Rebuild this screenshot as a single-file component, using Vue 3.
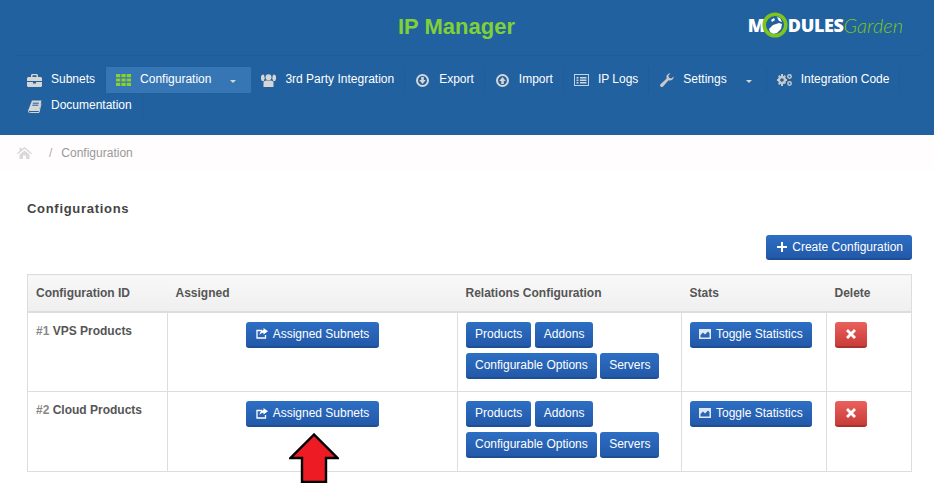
<script setup>
const NAV_ITEMS = [
	{ label: 'Subnets', icon: 'briefcase' },
	{ label: 'Configuration', icon: 'grid', active: true, caret: true },
	{ label: '3rd Party Integration', icon: 'users' },
	{ label: 'Export', icon: 'down' },
	{ label: 'Import', icon: 'up' },
	{ label: 'IP Logs', icon: 'list' },
	{ label: 'Settings', icon: 'wrench', caret: true },
	{ label: 'Integration Code', icon: 'cogs' },
	{ label: 'Documentation', icon: 'book' },
];

const ROWS = [
	{ id: '#1', name: 'VPS Products' },
	{ id: '#2', name: 'Cloud Products' },
];

const RELATIONS = ['Products', 'Addons', 'Configurable Options', 'Servers'];
</script>

<template>
	<div class="page">
		<header class="header">
			<div class="header-top">
				<h1 class="title">IP Manager</h1>
				<div class="logo">
					<span class="logo-bold">M</span>
					<svg class="logo-ring" viewBox="0 0 26 26" width="26" height="26">
						<path d="M9 8l3-2 1 2-3 2zM15 5l3 1 2 4-3-1zM7 17l4-4 6-2 3 1-1 5-4 4-4 1-3-2z" fill="#fff" />
						<circle cx="13" cy="13" r="10.8" fill="none" stroke="#7cc51c" stroke-width="3.6" />
					</svg>
					<span class="logo-bold">DULES</span>
					<span class="logo-thin">Garden</span>
				</div>
			</div>
			<nav class="nav">
				<a
					v-for="item in NAV_ITEMS"
					:key="item.label"
					class="nav-item"
					:class="{ active: item.active }"
				>
					<span class="nav-icon">
						<svg v-if="item.icon === 'briefcase'" viewBox="0 0 15 13" width="15" height="13" fill="#d6d6d6">
							<path d="M5 0h5l1 1v2h3l1 1v3H0V4l1-1h3V1zm.5 1.2V3h4V1.200z" fill-rule="evenodd" />
							<path d="M0 8h6v1.500h3V8h6v4l-1 1H1l-1-1z" />
						</svg>
						<svg v-else-if="item.icon === 'grid'" viewBox="0 0 15 12" width="15" height="12" fill="#8ad02f">
							<path d="M0 0h4.300v3.200H0zM5.400 0h4.300v3.200H5.400zM10.700 0H15v3.200h-4.300zM0 4.400h4.300v3.200H0zM5.400 4.400h4.300v3.200H5.400zM10.700 4.400H15v3.200h-4.300zM0 8.800h4.300V12H0zM5.400 8.800h4.300V12H5.400zM10.700 8.800H15V12h-4.300z" />
						</svg>
						<svg v-else-if="item.icon === 'users'" viewBox="0 0 15 13" width="15" height="13" fill="#d6d6d6">
							<circle cx="7.500" cy="3.200" r="3" />
							<path d="M2.500 7.500l2.500-1h5l2.500 1V13h-10z" />
							<path d="M1 .8h2l.8 3.500L2.800 7H.8L0 5V2.500zM14 .8h-2l-.8 3.500 1 2.700h2L15 5V2.500z" />
						</svg>
						<svg v-else-if="item.icon === 'down' || item.icon === 'up'" viewBox="0 0 13 13" width="13" height="13">
							<circle cx="6.500" cy="6.500" r="5.500" fill="none" stroke="#d6d6d6" stroke-width="2" />
							<path :transform="item.icon === 'up' ? 'rotate(180 6.500 6.500)' : ''" d="M5.200 3h2.600v3h2L6.500 10 3.200 6h2z" fill="#d6d6d6" />
						</svg>
						<svg v-else-if="item.icon === 'list'" viewBox="0 0 15 12" width="15" height="12">
							<rect x=".5" y=".5" width="14" height="11" fill="none" stroke="#b9d6ea" />
							<path d="M2.500 3h2v1.500h-2zM6 3h6.500v1.500H6zM2.500 5.500h2V7h-2zM6 5.500h6.500V7H6zM2.500 8h2v1.500h-2zM6 8h6.500v1.500H6z" fill="#d6d6d6" />
						</svg>
						<svg v-else-if="item.icon === 'wrench'" viewBox="0 0 13 13" width="14" height="14" fill="#c9c9c9">
							<path d="M12.800 3.200A3.600 3.600 0 0 1 8 6.700L2.800 12.500a1.500 1.500 0 0 1-2.300-2.100L6.200 5A3.600 3.600 0 0 1 9.800.2L7.800 2.300l.5 2.200 2.200.6z" />
						</svg>
						<svg v-else-if="item.icon === 'cogs'" viewBox="0 0 15 12" width="15" height="12" fill="#c9c9c9">
							<circle cx="5" cy="6" r="3" fill="none" stroke="#c9c9c9" stroke-width="2.400" />
							<path d="M4 0h2v2H4zM4 10h2v2H4zM0 5h2v2H0zM8 5h2v2H8zM1 2.300L2.300 1l1.200 1.200-1.300 1.300zM6.500 8.800l1.300-1.300L9 8.700 7.700 10zM1 9.700l1.200-1.200 1.300 1.300L2.300 11zM6.500 2.200L7.700 1 9 2.300 7.800 3.500z" />
							<circle cx="12.500" cy="2.500" r="1.700" fill="none" stroke="#c9c9c9" stroke-width="1.500" />
							<circle cx="12.500" cy="9.500" r="1.700" fill="none" stroke="#c9c9c9" stroke-width="1.500" />
						</svg>
						<svg v-else viewBox="0 0 14 13" width="14" height="13" fill="none">
							<path d="M4 .5h9.500L11 11H1.500a1 1 0 0 1-1-1.500z" fill="#d6d6d6" />
							<path d="M.8 9.800A1.600 1.600 0 0 0 2.500 12.500H11l2-9" stroke="#d6d6d6" />
							<path d="M4.800 3.200h6M4.300 5.200h6" stroke="#21619f" />
						</svg>
					</span>
					<span class="nav-label">{{ item.label }}</span>
					<span v-if="item.caret" class="caret"></span>
				</a>
			</nav>
		</header>

		<div class="breadcrumb">
			<svg class="home" viewBox="0 0 15 12" width="15" height="12" fill="#d9d9d9">
				<path d="M7.500 0L15 6.200l-.8 1L7.500 1.800.8 7.200 0 6.200 2.500 4V.8h2v1.500z" />
				<path d="M2.500 7.500l5-4 5 4V12H9V8.500H6V12H2.500z" />
			</svg>
			<span class="crumb-sep">/</span>
			<span class="crumb">Configuration</span>
		</div>

		<main class="content">
			<h2 class="heading">Configurations</h2>
			<div class="toolbar">
				<button class="btn btn-create">
					<svg viewBox="0 0 10 10" width="10" height="10" fill="#fff"><path d="M4 0h2v4h4v2H6v4H4V6H0V4h4z" /></svg>
					Create Configuration
				</button>
			</div>
			<table class="table">
				<colgroup>
					<col style="width: 140px" />
					<col style="width: 290px" />
					<col style="width: 224px" />
					<col style="width: 145px" />
					<col />
				</colgroup>
				<thead>
					<tr>
						<th>Configuration ID</th>
						<th>Assigned</th>
						<th>Relations Configuration</th>
						<th>Stats</th>
						<th>Delete</th>
					</tr>
				</thead>
				<tbody>
					<tr v-for="row in ROWS" :key="row.id">
						<td class="name"><span class="num">{{ row.id }}</span> {{ row.name }}</td>
						<td class="center">
							<button class="btn btn-assigned">
								<svg viewBox="0 0 12 11" width="12" height="11" fill="none">
									<path d="M9.500 7v3H1V2.500h5" stroke="#fff" stroke-width="1.300" />
									<path d="M7.500 0L12 3.200 7.500 6.500V4.700C5.500 4.700 4.200 5.500 3.500 7.500 3.500 4.500 5 2.200 7.500 2z" fill="#fff" />
								</svg>
								Assigned Subnets
							</button>
						</td>
						<td>
							<div class="btn-wrap">
								<button v-for="r in RELATIONS" :key="r" class="btn">{{ r }}</button>
							</div>
						</td>
						<td>
							<button class="btn">
								<svg viewBox="0 0 12 10" width="12" height="10">
									<path d="M0 0h12v10H0z" fill="#dfe9f5" />
									<path d="M1.500 8.500V6L4 3.500 6 5.500 9 2.500l1.500 1.500v4.500z" fill="#2c66b3" />
								</svg>
								Toggle Statistics
							</button>
						</td>
						<td>
							<button class="btn btn-danger" aria-label="Delete">
								<svg viewBox="0 0 10 10" width="10" height="10" fill="#fff">
									<path d="M2 0l3 3 3-3 2 2-3 3 3 3-2 2-3-3-3 3-2-2 3-3-3-3z" />
								</svg>
							</button>
						</td>
					</tr>
				</tbody>
			</table>
		</main>

		<svg class="arrow" viewBox="0 0 50 50" width="50" height="50">
			<path d="M25 1.500L1.500 25H13v24h24V25h11.500z" fill="#ed1c24" stroke="#000" stroke-width="2.400" />
		</svg>
	</div>
</template>

<style scoped>
.page {
	position: relative;
	width: 934px;
	height: 494px;
	overflow: hidden;
	background: #fff;
	font-family: "Liberation Sans", Arial, sans-serif;
	font-size: 12px;
}

.header {
	height: 135px;
	background: #21619f;
}

.header-top {
	height: 56px;
	display: flex;
	align-items: center;
	box-sizing: border-box;
	margin: 0 12px 0 17px;
	padding: 0 0 2px 381px;
	border-bottom: 1px solid #1e5b97;
}

.title {
	margin: 0;
	font-size: 22px;
	font-weight: 700;
	color: #80d136;
}

.logo {
	margin-left: auto;
	margin-right: 19px;
	display: flex;
	align-items: center;
	height: 26px;
	margin-top: -4px;
}

.logo-bold {
	font-family: "Open Sans", sans-serif;
	font-weight: 800;
	font-size: 18px;
	letter-spacing: -0.4px;
	color: #fff;
}

.logo-ring {
	margin-left: -3px;
	margin-right: 0;
	flex-shrink: 0;
}

.logo-thin {
	font-family: Lato, sans-serif;
	font-weight: 300;
	font-style: italic;
	font-size: 20px;
	color: #7cc51c;
}

.nav {
	display: flex;
	flex-wrap: wrap;
	margin: 11px 0 0 17px;
	width: 905px;
}

.nav-item {
	display: flex;
	align-items: center;
	height: 26px;
	padding: 0 10px;
	border-right: 1px solid #1f5c98;
	color: #fff;
	line-height: 24px;
}

.nav-item.active {
	background: #3676b5;
	border-right-color: #3676b5;
}

.nav-icon {
	width: 15px;
	margin-right: 9px;
	display: flex;
	justify-content: center;
	flex-shrink: 0;
}

.nav-label {
	margin-top: -2px;
}

.caret {
	margin: 2px 4px 0 19px;
	border-top: 3px solid #d6d6d6;
	border-left: 3px solid transparent;
	border-right: 3px solid transparent;
}

.breadcrumb {
	height: 36px;
	display: flex;
	align-items: center;
	padding-left: 17px;
	background: #fffdfe;
	color: #999;
}

.crumb-sep {
	margin-left: 17px;
	color: #aaa;
}

.crumb {
	margin-left: 9px;
}

.content {
	padding: 0 22px 0 27px;
}

.heading {
	margin: 30px 0 0;
	font-size: 13px;
	line-height: 16px;
	font-weight: 700;
	letter-spacing: 0.7px;
	color: #444;
}

.toolbar {
	display: flex;
	justify-content: flex-end;
	margin-top: 18px;
}

.btn {
	display: inline-flex;
	align-items: center;
	justify-content: center;
	gap: 5px;
	box-sizing: border-box;
	height: 26px;
	padding: 0 9px;
	border: 0;
	border-bottom: 2px solid #1e4f94;
	border-radius: 3px;
	background: linear-gradient(#2d6fc4, #2359a9);
	color: #fff;
	font-family: inherit;
	font-size: 12px;
	white-space: nowrap;
}

.btn-create {
	height: 25px;
	padding-left: 11px;
}

.btn-assigned {
	padding: 0 10px;
}

.btn-danger {
	width: 32px;
	padding: 0;
	background: linear-gradient(#e9605c, #c93d39);
	border-bottom-color: #a8322e;
}

.btn-wrap {
	display: flex;
	flex-wrap: wrap;
	gap: 5px 3.400px;
}

.table {
	width: 885px;
	margin-top: 14px;
	border-collapse: collapse;
	table-layout: fixed;
	border: 1px solid #ddd;
}

th {
	height: 37px;
	padding: 0 8px;
	box-sizing: border-box;
	background: linear-gradient(#f8f8f8, #efefef);
	border-bottom: 2px solid #ddd;
	font-size: 12px;
	font-weight: 700;
	color: #555;
	text-align: left;
}

td {
	height: 80px;
	box-sizing: border-box;
	padding: 9px 8px;
	border: 1px solid #ddd;
	vertical-align: top;
}

.name {
	padding-top: 11px;
	font-weight: 700;
	color: #555;
}

.num {
	color: #888;
}

.center {
	text-align: center;
}

.arrow {
	position: absolute;
	left: 289px;
	top: 433px;
}
</style>

<style>
body {
	margin: 0;
}
</style>
